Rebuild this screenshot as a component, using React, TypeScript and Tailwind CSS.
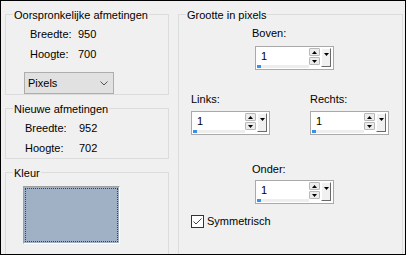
import React from "react";

function Tri({ up }: { up?: boolean }) {
  return (
    <svg width="5" height="3" viewBox="0 0 5 3" className="block">
      {up ? <polygon points="0,3 5,3 2.5,0" fill="#000" /> : <polygon points="0,0 5,0 2.5,3" fill="#000" />}
    </svg>
  );
}

function SpinBox() {
  return (
    <div className="flex h-[24px] w-[79px] border border-[#a9a9a9] bg-white">
      <div className="flex flex-1 flex-col">
        <div className="flex-1 pl-[5px] pt-[3px] leading-[13px]">1</div>
        <div className="mb-[1px] ml-[1px] flex h-[3px] bg-[#eeeeee]">
          <div className="w-[4px] bg-[#3d8ee8]" />
        </div>
      </div>
      <div className="mt-[1px] flex flex-col gap-[1px]">
        <div className="flex h-[8px] w-[11px] items-center justify-center rounded-[1px] border border-[#b9b9b9] bg-[#ececec]">
          <Tri up />
        </div>
        <div className="flex h-[8px] w-[11px] items-center justify-center rounded-[1px] border border-[#b9b9b9] bg-[#ececec]">
          <Tri />
        </div>
      </div>
      <div className="ml-[1px] mr-[2px] mt-[1px] flex h-[19px] w-[10px] justify-center border-b border-l border-r border-t border-b-[#696969] border-l-white border-r-[#696969] border-t-white bg-[#f0f0f0] pt-[4px]">
        <Tri />
      </div>
    </div>
  );
}

export default function App() {
  return (
    <div className="flex h-[255px] w-[406px] gap-[9px] overflow-hidden border border-black bg-[#f0f0f0] pl-[4px] pt-[5px] font-['Liberation_Sans',Arial,sans-serif] text-[11px] text-black">
      <div className="flex w-[164px] flex-col">
        <fieldset className="h-[91px] border border-[#dcdcdc]">
          <legend className="ml-[7px] px-[1px] pt-[3px] leading-[13px]">Oorspronkelijke afmetingen</legend>
          <div className="grid grid-cols-[48px_auto] pl-[24px] pt-[2px] leading-[20px]">
            <span>Breedte:</span>
            <span>950</span>
            <span>Hoogte:</span>
            <span>700</span>
          </div>
          <div className="ml-[18px] mt-[8px] flex h-[22px] w-[90px] items-center justify-between border border-[#adadad] bg-[#e1e1e1] pl-[3px] pr-[5px]">
            <span>Pixels</span>
            <svg width="8" height="5" viewBox="0 0 8 5" className="block">
              <polyline points="0.5,0.5 4,4 7.5,0.5" fill="none" stroke="#555" strokeWidth="1" />
            </svg>
          </div>
        </fieldset>
        <fieldset className="mt-[5px] h-[62px] border border-[#dcdcdc]">
          <legend className="ml-[7px] px-[1px] pt-[3px] leading-[13px]">Nieuwe afmetingen</legend>
          <div className="grid grid-cols-[54px_auto] pl-[19px] pt-[2px] leading-[20px]">
            <span>Breedte:</span>
            <span>952</span>
            <span>Hoogte:</span>
            <span>702</span>
          </div>
        </fieldset>
        <fieldset className="mt-[5px] h-[100px] shrink-0 border border-[#dcdcdc]">
          <legend className="ml-[7px] px-[1px] pt-[3px] leading-[13px]">Kleur</legend>
          <div className="ml-[17px] mt-[6px] h-[58px] w-[97px] border-b border-l border-r border-t border-b-white border-l-[#a0a0a0] border-r-white border-t-[#a0a0a0] bg-[#a0b1c5] p-[1px]">
            <div className="h-full w-full border border-dotted border-[#4a3f30]" />
          </div>
        </fieldset>
      </div>
      <fieldset className="h-[300px] w-[225px] shrink-0 border border-[#dcdcdc]">
        <legend className="ml-[7px] px-[1px] pt-[3px] leading-[13px]">Grootte in pixels</legend>
        <div className="flex flex-col pl-[12px]">
          <div className="ml-[61px] mt-[4px] flex flex-col">
            <span className="leading-[14px]">Boven:</span>
            <div className="ml-[3px] mt-[6px]">
              <SpinBox />
            </div>
          </div>
          <div className="mt-[22px] flex gap-[40px]">
            <div className="flex flex-col">
              <span className="leading-[14px]">Links:</span>
              <div className="mt-[5px]">
                <SpinBox />
              </div>
            </div>
            <div className="flex flex-col">
              <span className="leading-[14px]">Rechts:</span>
              <div className="mt-[5px]">
                <SpinBox />
              </div>
            </div>
          </div>
          <div className="ml-[61px] mt-[27px] flex flex-col">
            <span className="leading-[14px]">Onder:</span>
            <div className="ml-[3px] mt-[4px]">
              <SpinBox />
            </div>
          </div>
          <div className="mt-[10px] flex items-center gap-[3px]">
            <svg width="13" height="13" viewBox="0 0 13 13" className="block">
              <rect x="0.5" y="0.5" width="12" height="12" fill="#fff" stroke="#333" />
              <polyline points="2.5,6.5 5,9 10.5,3.5" fill="none" stroke="#444" strokeWidth="1" />
            </svg>
            <span className="leading-[14px]">Symmetrisch</span>
          </div>
        </div>
      </fieldset>
    </div>
  );
}
